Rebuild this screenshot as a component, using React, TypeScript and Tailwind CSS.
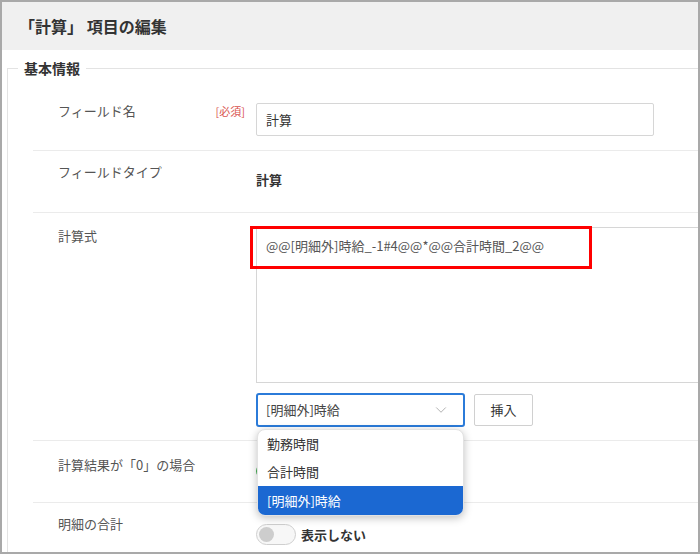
import { ChevronDown } from "lucide-react";

const font = { fontFamily: '"Noto Sans CJK JP", "Noto Sans", sans-serif' };

const options = ["勤務時間", "合計時間", "[明細外]時給"];

const Row = ({
  label,
  required,
  className,
  labelPad,
  children,
}: {
  label: string;
  required?: boolean;
  className: string;
  labelPad: string;
  children?: React.ReactNode;
}) => (
  <div className={`flex border-b border-[#ebebeb] pl-[25px] ${className}`}>
    <div className={`flex w-[198px] shrink-0 justify-between pr-[11px] ${labelPad}`}>
      <span className="text-[13px] leading-[18px] text-[#555]">{label}</span>
      {required && <span className="text-[11px] leading-[18px] text-[#d9534f]">[必須]</span>}
    </div>
    <div className="min-w-0 flex-1">{children}</div>
  </div>
);

export default function App() {
  return (
    <div style={font} className="relative h-[554px] w-[700px] overflow-hidden border-2 border-[#a9a9a9] bg-white">
      {/* header */}
      <div className="flex h-[48px] items-center bg-[#f0f0f0] pl-[17px]">
        <h1 className="text-[16px] font-bold text-[#333]">「計算」 項目の編集</h1>
      </div>

      <div className="pt-[8px]">
        <fieldset className="ml-[5px] border-l border-t border-[#e3e3e3]">
          <legend className="ml-[10px] px-[6px] text-[14px] font-bold leading-[20px] text-[#333]">基本情報</legend>

          <div className="ml-[25px]">
            <Row label="フィールド名" required className="h-[73px] pt-[25px]" labelPad="-mt-[1px]">
              <input
                readOnly
                value="計算"
                style={font}
                className="h-[33px] w-[398px] rounded-[2px] border border-[#d6d6d6] px-[9px] text-[13px] text-[#333] outline-none"
              />
            </Row>

            <Row label="フィールドタイプ" className="h-[62px] pt-[12px]" labelPad="">
              <div className="pt-[8px] text-[13px] font-bold leading-[18px] text-[#333]">計算</div>
            </Row>

            <Row label="計算式" className="h-[228px] pt-[14px]" labelPad="">
              <div className="relative">
                <div className="h-[156px] w-[460px] border border-[#d6d6d6] px-[9px] pt-[9px] text-[13px] leading-[18px] text-[#555]">
                  @@[明細外]時給_-1#4@@*@@合計時間_2@@
                </div>
                <div className="pointer-events-none absolute left-[-6px] top-[-1px] h-[43px] w-[342px] border-[3px] border-[#ff0000]" />

                <div className="mt-[10px] flex items-center gap-[9px]">
                  <div className="relative">
                    <div className="flex h-[34px] w-[209px] items-center justify-between rounded-[3px] border-2 border-[#2b7bd9] pl-[8px] pr-[12px] text-[13px] text-[#444]">
                      <span>[明細外]時給</span>
                      <ChevronDown className="h-[18px] w-[20px] text-[#a0a0a0]" strokeWidth={1.1} />
                    </div>

                    {/* dropdown list */}
                    <div className="absolute left-[1px] top-[36px] z-10 w-[207px] overflow-hidden rounded-[8px] border border-[#e2e2e2] bg-white shadow-[0_2px_8px_rgba(0,0,0,0.25)]">
                      {options.map((o, i) => (
                        <div
                          key={o}
                          className={`flex h-[28px] items-center pl-[9px] text-[13px] ${
                            i === 2 ? "h-[29px] bg-[#1b68d2] text-white" : "text-[#333]"
                          }`}
                        >
                          {o}
                        </div>
                      ))}
                    </div>
                  </div>
                  <button className="h-[32px] w-[59px] rounded-[2px] border border-[#d0d0d0] bg-white text-[13px] text-[#333]">
                    挿入
                  </button>
                </div>
              </div>
            </Row>

            <Row label="計算結果が「0」の場合" className="h-[62px] pt-[15px]" labelPad="">
              <div className="pt-[8px]">
                <span className="block h-[14px] w-[14px] rounded-full border-[4px] border-[#3cae4c]" />
              </div>
            </Row>

            <Row label="明細の合計" className="h-[60px] pt-[12px]" labelPad="">
              <div className="flex items-center gap-[5px] pt-[9px]">
                <div className="flex h-[21px] w-[40px] items-center rounded-full border border-[#cfcfcf] bg-[#f7f7f7] pl-[2px]">
                  <span className="h-[15px] w-[15px] rounded-full bg-[#cdcdcd]" />
                </div>
                <span className="text-[13px] font-bold text-[#333]">表示しない</span>
              </div>
            </Row>
          </div>
        </fieldset>
      </div>
    </div>
  );
}
